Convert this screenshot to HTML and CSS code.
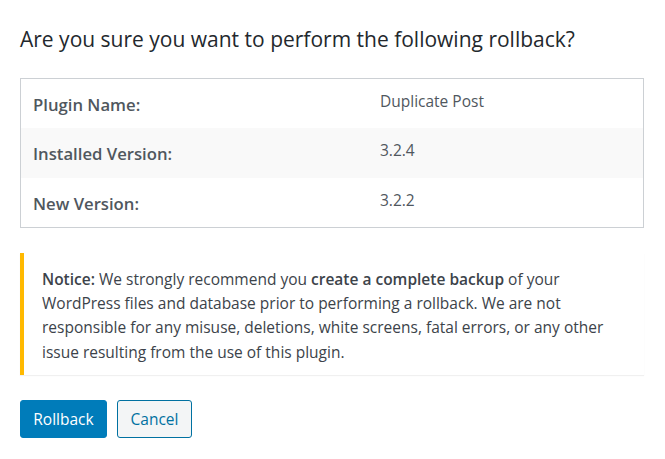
FILE: index.html
```html
<!DOCTYPE html>
<html lang="en">
<head>
<meta charset="utf-8">
<title>Rollback</title>
<link rel="stylesheet" href="styles.css">
</head>
<body>
<div class="wrap">
  <h2 class="title">Are you sure you want to perform the following rollback?</h2>
  <div class="info">
    <div class="row">
      <div class="label">Plugin Name:</div>
      <div class="value">Duplicate Post</div>
    </div>
    <div class="row alt">
      <div class="label">Installed Version:</div>
      <div class="value">3.2.4</div>
    </div>
    <div class="row">
      <div class="label">New Version:</div>
      <div class="value">3.2.2</div>
    </div>
  </div>
  <div class="notice">
    <p><strong>Notice:</strong> We strongly recommend you <strong>create a complete backup</strong> of your WordPress files and database prior to performing a rollback. We are not responsible for any misuse, deletions, white screens, fatal errors, or any other issue resulting from the use of this plugin.</p>
  </div>
  <div class="actions">
    <button class="btn primary">Rollback</button>
    <button class="btn secondary">Cancel</button>
  </div>
</div>
</body>
</html>
```
FILE: styles.css
```css
html, body {
  margin: 0;
  padding: 0;
  background: #fff;
}
body {
  font-family: "Open Sans", "Noto Sans", sans-serif;
  color: #3c434a;
}
.wrap {
  padding: 0 21px 0 20px;
}
.title {
  margin: 0;
  padding-top: 25px;
  height: 78px;
  box-sizing: border-box;
  font-size: 21px;
  line-height: 28px;
  font-weight: 400;
  color: #23282d;
}
.info {
  border: 1px solid #ccd0d4;
  display: flex;
  flex-direction: column;
}
.row {
  display: flex;
  height: 49.3px;
  box-sizing: border-box;
}
.row.alt {
  background: #f9f9f9;
}
.label {
  width: 347px;
  padding: 14px 0 0 12px;
  font-size: 16.7px;
  line-height: 24px;
  font-weight: 600;
  color: #50575e;
}
.value {
  padding: 12px 0 0 0;
  font-size: 15.5px;
  line-height: 20px;
  color: #50575e;
}
.notice {
  margin-top: 25px;
  border-left: 4px solid #ffb900;
  background: #fff;
  box-shadow: 0 1px 1px rgba(0, 0, 0, 0.06);
  padding: 14px 16px 11px 18px;
}
.notice p {
  margin: 0;
  font-size: 15.5px;
  line-height: 24.2px;
  color: #3c434a;
}
.notice strong {
  font-weight: 600;
}
.actions {
  margin-top: 25px;
  display: flex;
  gap: 10px;
}
.btn {
  height: 38px;
  border-radius: 3px;
  font-family: "Open Sans", "Noto Sans", sans-serif;
  font-size: 15.5px;
  line-height: 36px;
  padding: 0 12px;
  cursor: pointer;
}
.primary {
  background: #007cba;
  border: 1px solid #007cba;
  color: #fff;
  width: 87px;
}
.secondary {
  background: #f3f5f6;
  border: 1px solid #0071a1;
  color: #0071a1;
  width: 75px;
}
```
